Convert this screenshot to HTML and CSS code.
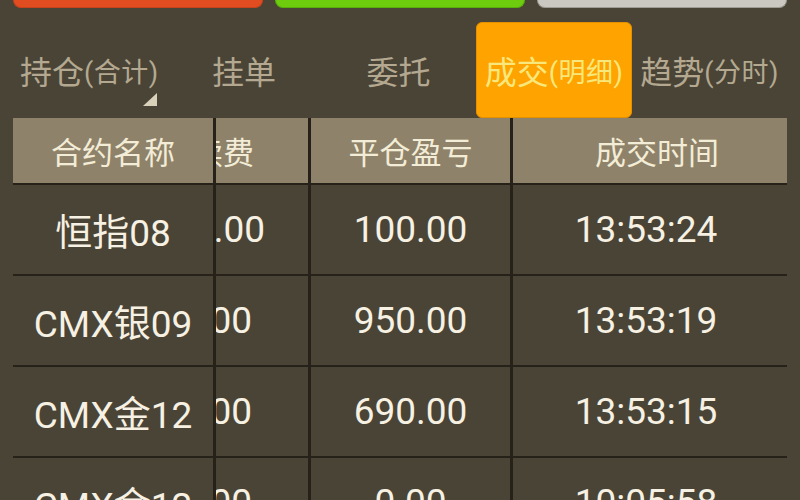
FILE: index.html
```html
<!DOCTYPE html>
<html lang="zh-CN">
<head>
<meta charset="utf-8">
<title>成交明细</title>
<link rel="stylesheet" href="styles.css">
</head>
<body>
<div class="app">
  <div class="buttons">
    <div class="btn btn-red"></div>
    <div class="btn btn-green"></div>
    <div class="btn btn-grey"></div>
  </div>
  <div class="tabs">
    <div class="tab tab-first"><span class="main">持仓</span><span class="sub">(合计)</span><span class="corner"></span></div>
    <div class="tab"><span class="main">挂单</span></div>
    <div class="tab"><span class="main">委托</span></div>
    <div class="tab active"><span class="main">成交</span><span class="sub">(明细)</span></div>
    <div class="tab"><span class="main">趋势</span><span class="sub">(分时)</span></div>
  </div>
  <div class="table">
    <div class="cell head c1">合约名称</div>
    <div class="cell head c2 h2"><span>续费</span></div>
    <div class="cell head c3">平仓盈亏</div>
    <div class="cell head c4 h4">成交时间</div>

    <div class="cell c1">恒指08</div>
    <div class="cell c2 r1"><span>.00</span></div>
    <div class="cell c3">100.00</div>
    <div class="cell c4 t4">13:53:24</div>

    <div class="cell c1">CMX银09</div>
    <div class="cell c2"><span>00</span></div>
    <div class="cell c3">950.00</div>
    <div class="cell c4 t4">13:53:19</div>

    <div class="cell c1">CMX金12</div>
    <div class="cell c2"><span>00</span></div>
    <div class="cell c3">690.00</div>
    <div class="cell c4 t4">13:53:15</div>

    <div class="cell c1">CMX金12</div>
    <div class="cell c2"><span>00</span></div>
    <div class="cell c3">0.00</div>
    <div class="cell c4 t4">10:05:58</div>
  </div>
</div>
</body>
</html>
```

FILE: styles.css
```css
html, body {
  margin: 0;
  padding: 0;
  background: #4a4437;
  overflow: hidden;
}
body {
  width: 800px;
  height: 500px;
  font-family: Roboto, "Noto Sans CJK SC", sans-serif;
}
.app {
  padding: 0 13px 0 12px;
}
.buttons {
  display: flex;
  gap: 12px;
  padding: 0 0 0 1px;
  height: 8px;
}
.btn {
  flex: 1;
  height: 7px;
  border-radius: 0 0 8px 8px;
}
.btn-red { background: #e14c20; border: 1px solid #c8431c; border-top: none; }
.btn-green { background: #6dcc0d; border: 1px solid #5aae0a; border-top: none; }
.btn-grey { background: #cac8c1; border: 1px solid #9e9b92; border-top: none; }

.tabs {
  display: flex;
  margin-top: 14px;
  height: 96px;
}
.tab {
  flex: 1;
  display: flex;
  align-items: center;
  justify-content: center;
  color: #b4a990;
  position: relative;
  white-space: nowrap;
}
.tab .main {
  font-size: 32px;
}
.tab .sub {
  font-size: 27px;
  letter-spacing: 0.5px;
}
.tab.active {
  background: #ffa300;
  border: 1px solid #e49100;
  border-radius: 6px;
  color: #f8e87c;
}
.corner {
  position: absolute;
  left: 131px;
  top: 71px;
  width: 14px;
  height: 13px;
  background: #d9d1b9;
  clip-path: polygon(100% 0, 100% 100%, 0 100%);
}

.table {
  display: grid;
  grid-template-columns: 200px 92px 199px 274px;
  grid-template-rows: 65px repeat(4, 89px);
  column-gap: 3px;
  row-gap: 2px;
  background: #26221a;
  margin-left: 1px;
}
.cell {
  background: #4a4437;
  display: flex;
  align-items: center;
  justify-content: center;
  color: #f6f1e2;
  font-size: 37px;
  white-space: nowrap;
  overflow: hidden;
}
.cell.head {
  background: #8e826a;
  color: #f3ecd6;
  font-size: 31px;
}
.c2 {
  justify-content: flex-end;
  padding-right: 56px;
}
.c2 span { flex-shrink: 0; }
.c2.h2 { padding-right: 54px; }
.c2.r1 { padding-right: 43px; }
.h4 { padding-left: 14px; }
.t4 { padding-right: 8px; }
```
